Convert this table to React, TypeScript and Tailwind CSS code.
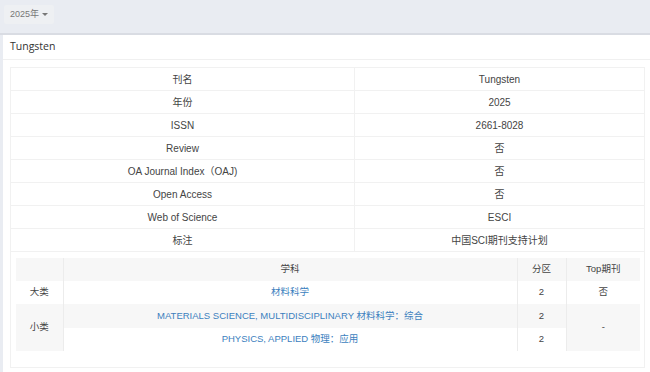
import React from 'react';

interface InfoRow {
  label: string;
  value: string;
}

const infoRows: InfoRow[] = [
  { label: '刊名', value: 'Tungsten' },
  { label: '年份', value: '2025' },
  { label: 'ISSN', value: '2661-8028' },
  { label: 'Review', value: '否' },
  { label: 'OA Journal Index（OAJ)', value: '否' },
  { label: 'Open Access', value: '否' },
  { label: 'Web of Science', value: 'ESCI' },
  { label: '标注', value: '中国SCI期刊支持计划' },
];

function App() {
  return (
    <div
      className="w-[650px] h-[372px] overflow-hidden bg-[#e9ecf2] text-[#444]"
      style={{ fontFamily: '"Liberation Sans", "Noto Sans CJK SC", sans-serif' }}
    >
      {/* top bar */}
      <div className="h-[35px] px-[4px] pt-[5px] border-b-2 border-[#d9dce3]">
        <button className="h-[19px] px-[6px] bg-[#eef0f3] rounded-[2px] text-[9px] text-[#777] flex items-center gap-[3px]">
          2025年
          <span className="inline-block w-0 h-0 border-l-[3px] border-r-[3px] border-t-[3px] border-l-transparent border-r-transparent border-t-[#777]" />
        </button>
      </div>

      {/* panel */}
      <div className="ml-[3px] bg-white h-[340px]">
        <div
          className="h-[25px] px-[7px] flex items-center text-[10.5px] text-[#333] border-b border-[#f0f0f0]"
          style={{ fontFamily: '"Open Sans", "Noto Sans CJK SC", sans-serif' }}
        >
          Tungsten
        </div>
        <div className="pt-[7px] pl-[7px] pr-[5px]">
          <table className="w-full border-collapse border border-[#f1f1f1] text-[10px] text-center">
            <tbody>
              {infoRows.map((r) => (
                <tr key={r.label} className="h-[23px] border-b border-[#f1f1f1]">
                  <td className="w-[344px] border-r border-[#f1f1f1]">{r.label}</td>
                  <td>{r.value}</td>
                </tr>
              ))}
              <tr>
                <td colSpan={2} className="pt-[6px] pb-[16px] pl-[5px] pr-[4px]">
                  <table className="w-full border-collapse text-[9.5px]">
                    <tbody>
                      <tr className="h-[23px] bg-[#f7f7f7]">
                        <td className="w-[47px] border-r border-[#ececec]"></td>
                        <td className="border-r border-[#ececec]">学科</td>
                        <td className="w-[49px] border-r border-[#ececec]">分区</td>
                        <td className="w-[74px]">Top期刊</td>
                      </tr>
                      <tr className="h-[23px] bg-white">
                        <td className="border-r border-[#ececec]">大类</td>
                        <td className="border-r border-[#ececec] text-[#3c7fbe]">材料科学</td>
                        <td className="border-r border-[#ececec]">2</td>
                        <td>否</td>
                      </tr>
                      <tr className="h-[24px] bg-[#f7f7f7]">
                        <td rowSpan={2} className="border-r border-[#ececec]">小类</td>
                        <td className="border-r border-[#ececec] text-[#3c7fbe]">
                          MATERIALS SCIENCE, MULTIDISCIPLINARY 材料科学：综合
                        </td>
                        <td className="border-r border-[#ececec]">2</td>
                        <td rowSpan={2}>-</td>
                      </tr>
                      <tr className="h-[23px]">
                        <td className="border-r border-[#ececec] bg-white text-[#3c7fbe]">
                          PHYSICS, APPLIED 物理：应用
                        </td>
                        <td className="border-r border-[#ececec] bg-white">2</td>
                      </tr>
                    </tbody>
                  </table>
                </td>
              </tr>
            </tbody>
          </table>
        </div>
      </div>
    </div>
  );
}

export default App;
